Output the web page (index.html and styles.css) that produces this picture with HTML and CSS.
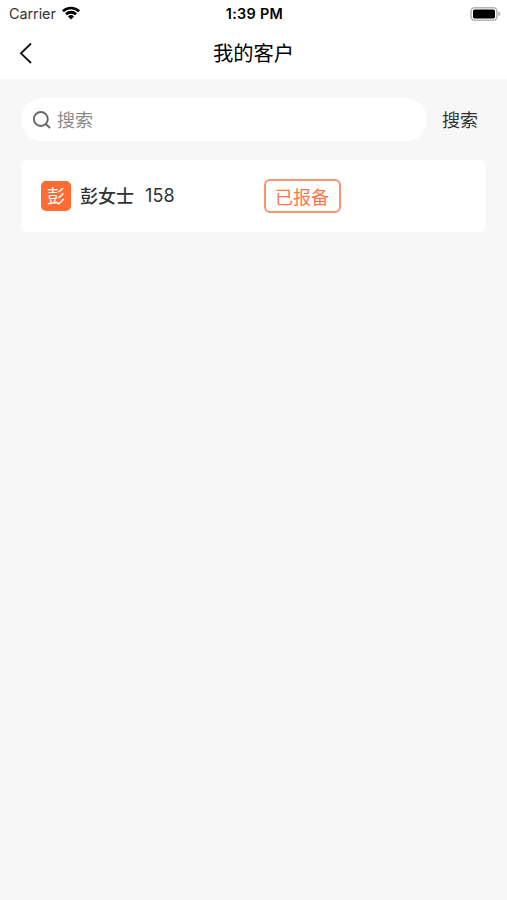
FILE: index.html
```html
<!DOCTYPE html>
<html lang="zh-CN">
<head>
<meta charset="utf-8">
<title>我的客户</title>
<link rel="stylesheet" href="styles.css">
</head>
<body>
<header class="top">
  <div class="status">
    <div class="carrier"><span>Carrier</span>
      <svg class="wifi" viewBox="0 0 18 14" width="18" height="14"><path d="M0 4.3 A13 13 0 0 1 18 4.3 L16.2 6.2 A10.4 10.4 0 0 0 1.8 6.2Z M3 7.3 A8.6 8.6 0 0 1 15 7.3 L13.1 9.3 A6 6 0 0 0 4.9 9.3Z M6 10.4 A4.4 4.4 0 0 1 12 10.4 L9 13.5Z"/></svg>
    </div>
    <div class="time">1:39 PM</div>
    <div class="power"><svg width="31" height="14" viewBox="0 0 31 14"><rect x="1" y=".8" width="26" height="12.4" rx="3.6" fill="none" stroke="#b5b5b5" stroke-width="1.6"/><rect x="3" y="2.6" width="22" height="8.8" rx="1.6"/><path d="M28.4 4.8 Q30.6 5.4 30.6 7 Q30.6 8.6 28.4 9.2Z" fill="#b5b5b5"/></svg></div>
  </div>
  <nav class="nav">
    <svg class="back" width="14" height="22" viewBox="0 0 14 22"><path d="M12 1.5 2 11.3l10 9.7" fill="none" stroke="#111" stroke-width="1.8"/></svg>
    <h1>我的客户</h1>
  </nav>
</header>
<main>
  <div class="search">
    <div class="field"><svg width="20" height="20" viewBox="0 0 20 20" fill="none" stroke="#666" stroke-width="1.9"><circle cx="8.8" cy="9" r="7"/><path d="m13.8 14 4.2 4"/></svg><span>搜索</span></div>
    <div class="go">搜索</div>
  </div>
  <section class="card">
    <div class="avatar">彭</div><div class="name">彭女士</div><div class="phone">158</div><div class="tag">已报备</div>
  </section>
</main>
</body>
</html>
```
FILE: styles.css
```css
* { box-sizing: border-box; }
body { margin: 0; min-height: 900px; background: #f7f7f7; color: #333; font-family: Inter, "Noto Sans CJK SC", sans-serif; font-size: 18px; }
svg { display: block; flex: none; }
.top { height: 79px; background: #fff; color: #000; }
.status { height: 27px; padding: 0 6px 0 9px; display: grid; grid-template-columns: 1fr auto 1fr; align-items: center; }
.carrier { display: flex; align-items: center; gap: 6px; font-size: 14.4px; color: #333; }
.carrier span { width: 47px; letter-spacing: -.05px; }
.wifi { margin-bottom: 1px; }
.time { font-size: 14.4px; font-weight: 600; letter-spacing: .3px; margin-right: 1px; }
.power { justify-self: end; }
.nav { height: 50px; display: grid; grid-template-columns: 1fr auto 1fr; align-items: center; }
.back { margin-left: 19px; margin-top: 1px; }
h1 { margin: 0; padding-bottom: 1px; font-size: 20.3px; font-weight: 400; }
main { padding: 19px 21px 0 21px; }
.search { display: flex; align-items: center; height: 43px; }
.field { width: 406px; height: 43px; flex: none; border-radius: 22px; background: #fff; display: flex; align-items: center; gap: 5px; padding-left: 11px; color: #8c8c8c; }
.field span, .go { padding-bottom: 2px; }
.go { margin-left: 15px; white-space: nowrap; }
.card { margin-top: 19px; height: 72px; border-radius: 5px; background: #fff; padding-left: 20px; display: flex; align-items: center; }
.avatar { width: 30px; height: 30px; border-radius: 5px; background: #ff6b35; color: #fff; display: flex; align-items: center; justify-content: center; padding-bottom: 2px; }
.name { margin-left: 9px; width: 65px; font-weight: 500; padding-bottom: 2px; }
.phone { width: 119px; padding-bottom: 1px; letter-spacing: .1px; }
.tag { width: 77px; height: 34px; border: 2px solid #fa9470; border-radius: 6px; color: #ff7547; display: flex; align-items: center; justify-content: center; padding: 0 1px 1px 0; }
```
